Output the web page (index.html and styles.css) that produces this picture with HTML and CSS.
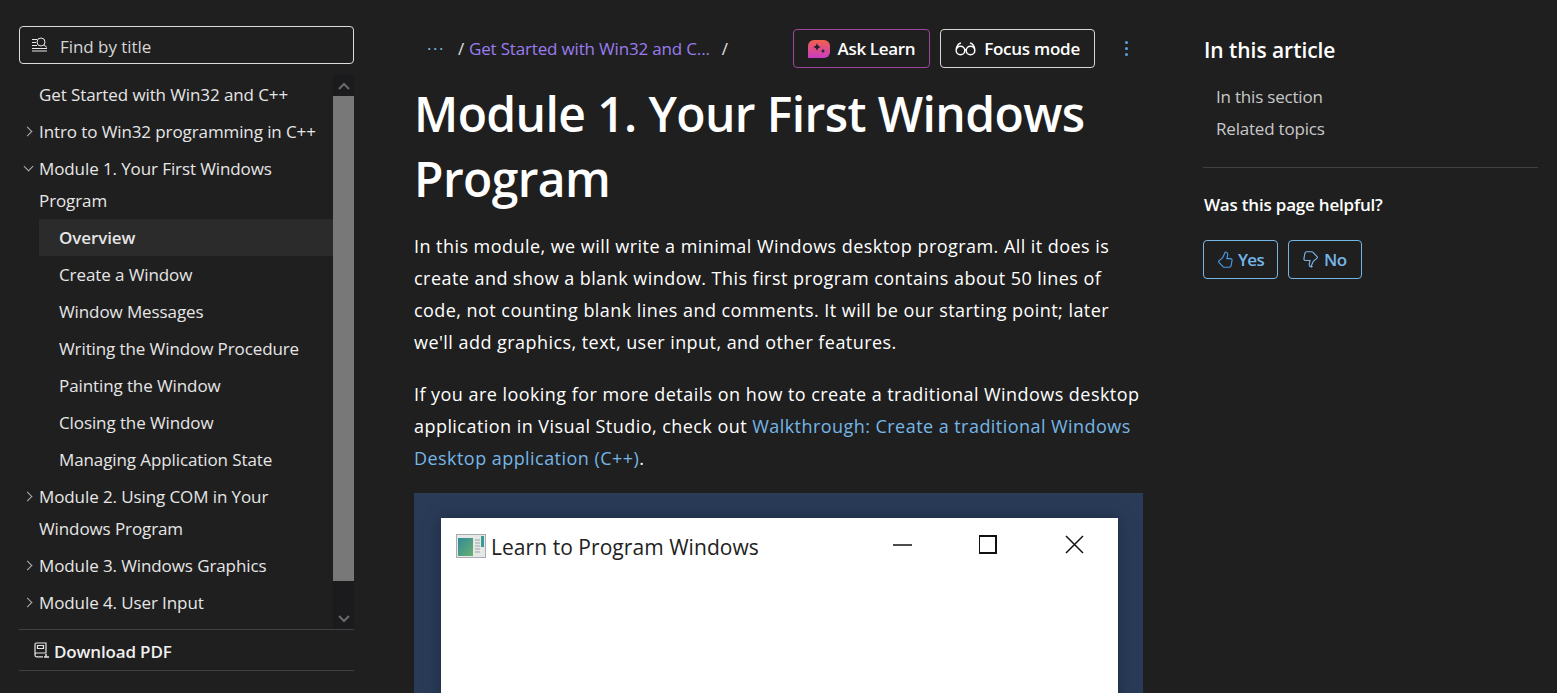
FILE: index.html
```html
<!DOCTYPE html>
<html lang="en">
<head>
    <meta charset="UTF-8">
    <meta name="viewport" content="width=device-width, initial-scale=1.0">
    <title>Module 1. Your First Windows Program</title>
    <link rel="stylesheet" href="styles.css">
</head>
<body>
    <aside class="sidebar">
        <div class="search">
            <svg class="search-icon" width="17" height="16" viewBox="0 0 17 16" fill="none" stroke="#e6e6e6" stroke-width="1">
                <path d="M1 2.5h5M1 5.5h4M1 8.5h5M1 11.5h15M1 14h15"/>
                <circle cx="10" cy="5" r="4"/>
                <path d="M13 8l3 2.5"/>
            </svg>
            <span>Find by title</span>
        </div>
        <div class="tree-wrap">
            <ul class="tree">
                <li>Get Started with Win32 and C++</li>
                <li class="closed">Intro to Win32 programming in C++</li>
                <li class="open">Module 1. Your First Windows Program</li>
                <li class="sub current">Overview</li>
                <li class="sub">Create a Window</li>
                <li class="sub">Window Messages</li>
                <li class="sub">Writing the Window Procedure</li>
                <li class="sub">Painting the Window</li>
                <li class="sub">Closing the Window</li>
                <li class="sub">Managing Application State</li>
                <li class="closed">Module 2. Using COM in Your Windows Program</li>
                <li class="closed">Module 3. Windows Graphics</li>
                <li class="closed">Module 4. User Input</li>
            </ul>
            <div class="scrollbar">
                <div class="scroll-btn">
                    <svg width="12" height="8" viewBox="0 0 12 8" fill="none" stroke="#6a6a6a" stroke-width="2"><path d="M1 7l5-5 5 5"/></svg>
                </div>
                <div class="scroll-thumb"></div>
                <div class="scroll-track"></div>
                <div class="scroll-btn">
                    <svg width="12" height="8" viewBox="0 0 12 8" fill="none" stroke="#6a6a6a" stroke-width="2"><path d="M1 1l5 5 5-5"/></svg>
                </div>
            </div>
        </div>
        <div class="download">
            <svg width="15" height="16" viewBox="0 0 15 16" fill="none" stroke="#e6e6e6" stroke-width="1.2">
                <path d="M1 13V2.5C1 1.6 1.6 1 2.5 1H12v10H2.5C1.6 11 1 11.8 1 13c0 1 .6 1.8 1.5 1.8H9"/>
                <path d="M3.5 3.5h6v3h-6z"/>
                <path d="M12 12v2.5M10 15h5" stroke-width="1.5"/>
            </svg>
            <span>Download PDF</span>
        </div>
    </aside>

    <main class="content">
        <div class="topbar">
            <nav class="crumbs">
                <span class="dots">&middot;&middot;&middot;</span>
                <span class="slash">/</span>
                <a href="#">Get Started with Win32 and C...</a>
                <span class="slash second">/</span>
            </nav>
            <div class="actions">
                <button class="btn btn-ask">
                    <svg width="22" height="18" viewBox="0 0 22 18">
                        <defs>
                            <linearGradient id="askGrad" x1="0" y1="0" x2="0" y2="1">
                                <stop offset="0" stop-color="#f2604e"/>
                                <stop offset="1" stop-color="#c93cc4"/>
                            </linearGradient>
                        </defs>
                        <path d="M6 0h10a6 6 0 0 1 6 6v6a6 6 0 0 1-6 6H0V6a6 6 0 0 1 6-6z" fill="url(#askGrad)"/>
                        <path d="M9 3c.5 2.5 1.5 3.5 4 4-2.5.5-3.5 1.5-4 4-.5-2.5-1.5-3.5-4-4 2.5-.5 3.5-1.5 4-4zM15 8.5c.3 1.5.9 2.1 2.5 2.500-1.600.4-2.200 1-2.500 2.500-.3-1.500-.9-2.100-2.500-2.500 1.600-.4 2.200-1 2.500-2.500z" fill="#20202a"/>
                    </svg>
                    <span>Ask Learn</span>
                </button>
                <button class="btn btn-focus">
                    <svg width="21" height="14" viewBox="0 0 21 14" fill="none" stroke="#fff" stroke-width="1.5">
                        <circle cx="5.5" cy="8.5" r="4.3"/>
                        <circle cx="15.5" cy="8.5" r="4.3"/>
                        <path d="M9.8 8c.4-.5 1-.5 1.4 0M1.3 7.5C1.8 4 3 1.5 6 1M19.7 7.5C19.2 4 18 1.5 15 1"/>
                    </svg>
                    <span>Focus mode</span>
                </button>
                <div class="more"><i></i><i></i><i></i></div>
            </div>
        </div>

        <h1>Module 1. Your First Windows Program</h1>

        <p>In this module, we will write a minimal Windows desktop program. All it does is create and show a blank window. This first program contains about 50 lines of code, not counting blank lines and comments. It will be our starting point; later we'll add graphics, text, user input, and other features.</p>
        <p>If you are looking for more details on how to create a traditional Windows desktop application in Visual Studio, check out <a href="#">Walkthrough: Create a traditional Windows Desktop application (C++)</a>.</p>

        <div class="figure">
            <div class="demo-window">
                <div class="demo-title">
                    <svg class="demo-icon" width="30" height="24" viewBox="0 0 30 24">
                        <defs>
                            <linearGradient id="paneGrad" x1="0" y1="0" x2="1" y2="1">
                                <stop offset="0" stop-color="#2f8a9a"/>
                                <stop offset="1" stop-color="#6ab06e"/>
                            </linearGradient>
                        </defs>
                        <rect x="0.5" y="0.5" width="29" height="23" fill="#e6e8e8" stroke="#a8aeb0"/>
                        <rect x="2" y="4" width="15" height="18" fill="url(#paneGrad)"/>
                        <path d="M19 6h5M19 9h5M19 12h5M19 15h5M19 18h5" stroke="#a0a4a4"/>
                        <rect x="25" y="2" width="3" height="11" fill="#3c9a94"/>
                    </svg>
                    <span class="demo-text">Learn to Program Windows</span>
                    <div class="demo-controls">
                        <svg width="20" height="20" viewBox="0 0 20 20" fill="none" stroke="#111" stroke-width="1.5"><path d="M0 10h19"/></svg>
                        <svg width="20" height="20" viewBox="1 0 20 20" fill="none" stroke="#111" stroke-width="2"><rect x="1" y="1" width="17" height="17"/></svg>
                        <svg width="20" height="20" viewBox="0 0 20 20" fill="none" stroke="#111" stroke-width="1.5"><path d="M1 1l17 17M18 1L1 18"/></svg>
                    </div>
                </div>
            </div>
        </div>
    </main>

    <aside class="right">
        <h2>In this article</h2>
        <ul class="toc">
            <li>In this section</li>
            <li>Related topics</li>
        </ul>
        <hr>
        <h3>Was this page helpful?</h3>
        <div class="feedback">
            <button class="btn-fb btn-yes">
                <svg width="15" height="17" viewBox="0 0 16 18" fill="none" stroke="#4c9be8" stroke-width="1.2">
                    <path d="M7.5 1.5L5 7 1 10.5c-.4.4-.4 1 0 1.5l4.5 4.8c.3.3.7.5 1.2.5h5.3c1 0 1.800-.7 2-1.700l1-5.600c.2-1-.6-2-1.700-2H9.500l.8-4C10.600 1.500 8.300.5 7.500 1.500z"/>
                </svg>
                <span>Yes</span>
            </button>
            <button class="btn-fb">
                <svg width="15" height="17" viewBox="0 0 16 18" fill="none" stroke="#7ab4ea" stroke-width="1.2">
                    <path d="M8.5 16.5L11 11l4-3.500c.4-.4.4-1 0-1.500l-4.500-4.800C10.200.9 9.800.7 9.300.7H4C3 .7 2.200 1.400 2 2.400L1 8c-.2 1 .6 2 1.700 2h4.800l-.8 4c-.3 2.500 2 3.500 2.800 2.500z"/>
                </svg>
                <span>No</span>
            </button>
        </div>
    </aside>
</body>
</html>
```

FILE: styles.css
```css
* {
    box-sizing: border-box;
}

body {
    margin: 0;
    padding: 0 19px;
    height: 693px;
    overflow: hidden;
    display: flex;
    gap: 60px;
    background-color: #1f1f1f;
    color: #fff;
    font-family: "Open Sans", "Noto Sans", sans-serif;
    font-size: 18px;
    line-height: 32px;
}

/* left column */
.sidebar {
    width: 335px;
    flex-shrink: 0;
    padding-top: 26px;
}

.search {
    height: 38px;
    display: flex;
    align-items: center;
    padding-left: 11px;
    border: 1px solid #dcdcdc;
    border-radius: 4px;
    font-size: 17px;
    color: #d6d6d6;
    letter-spacing: -0.05px;
}

.search span {
    padding-top: 3px;
}

.search-icon {
    margin-right: 12px;
}

.tree-wrap {
    margin-top: 11px;
    height: 555px;
    display: flex;
    border-bottom: 1px solid #404040;
}

.tree {
    list-style: none;
    margin: 0;
    padding: 1px 0 0;
    flex: 1;
    font-size: 17px;
    letter-spacing: -0.1px;
    color: #e6e6e6;
}

.tree li {
    position: relative;
    padding: 2.5px 0 2.5px 20px;
}

.tree li.sub {
    margin-left: 20px;
    padding-left: 20px;
}

.tree li.current {
    background-color: #2b2b2b;
    font-weight: 600;
}

.tree li.closed::before {
    content: "";
    position: absolute;
    left: 5px;
    top: 15px;
    width: 6px;
    height: 6px;
    border-top: 1.5px solid #b0b0b0;
    border-right: 1.5px solid #b0b0b0;
    transform: rotate(45deg);
}

.tree li.open::before {
    content: "";
    position: absolute;
    left: 6px;
    top: 13px;
    width: 6px;
    height: 6px;
    border-bottom: 1.5px solid #b0b0b0;
    border-right: 1.5px solid #b0b0b0;
    transform: rotate(45deg);
}

.scrollbar {
    width: 21px;
    display: flex;
    flex-direction: column;
    background-color: #1b1b1d;
}

.scroll-btn {
    height: 21px;
    display: flex;
    align-items: center;
    justify-content: center;
}

.scroll-thumb {
    height: 485px;
    background-color: #787878;
}

.scroll-track {
    flex: 1;
}

.download {
    height: 41px;
    display: flex;
    align-items: center;
    gap: 5px;
    padding-left: 15px;
    border-bottom: 1px solid #404040;
    font-size: 17px;
    font-weight: 600;
    letter-spacing: -0.15px;
    color: #f0f0f0;
}

.download span {
    padding-top: 3px;
}

/* middle column */
.content {
    width: 729px;
    flex-shrink: 0;
}

.topbar {
    height: 81px;
    padding-top: 29px;
    display: flex;
    justify-content: space-between;
}

.crumbs {
    height: 39px;
    display: flex;
    align-items: center;
    padding-top: 1px;
    font-size: 17px;
    letter-spacing: -0.17px;
}

.crumbs a {
    color: #9a7cf0;
    text-decoration: none;
}

.dots {
    color: #75b6e7;
    margin: 0 13px;
    letter-spacing: 1.5px;
}

.slash {
    margin-right: 5px;
    color: #e0e0e0;
}

.slash.second {
    margin: 0 0 0 12px;
}

.actions {
    display: flex;
    align-items: flex-start;
    gap: 10px;
}

.btn {
    height: 39px;
    display: flex;
    align-items: center;
    gap: 8px;
    padding: 0 14px;
    background: none;
    border: 1px solid #d6d6d6;
    border-radius: 4px;
    color: #fff;
    font: 600 17px "Open Sans", sans-serif;
    letter-spacing: -0.25px;
}

.btn-ask {
    border-color: #9c479c;
    letter-spacing: -0.35px;
}

.more {
    width: 38px;
    height: 39px;
    display: flex;
    flex-direction: column;
    align-items: center;
    justify-content: center;
    gap: 3px;
    padding-left: 4px;
}

.more i {
    width: 3px;
    height: 3px;
    border-radius: 50%;
    background-color: #5aa0e6;
}

h1 {
    margin: 0;
    font-size: 48px;
    line-height: 65px;
    font-weight: 600;
    letter-spacing: -0.6px;
}

p {
    margin: 19px 0 0;
    letter-spacing: 0.45px;
}

p + p {
    margin-top: 20px;
}

p a {
    color: #75b6e7;
    text-decoration: none;
}

.figure {
    margin-top: 19px;
    height: 300px;
    padding: 25px 25px 0 27px;
    background-color: #2a3b58;
}

.demo-window {
    height: 100%;
    background-color: #fff;
    padding: 14px 15px;
    box-shadow: 0 0 14px #1e2b40;
    color: #222;
}

.demo-title {
    height: 28px;
    display: flex;
    align-items: center;
}

.demo-icon {
    margin-right: 5px;
}

.demo-text {
    padding-top: 2px;
    font-size: 21px;
    letter-spacing: 0.05px;
}

.demo-controls {
    margin-left: auto;
    display: flex;
    gap: 66px;
    padding-right: 18px;
    padding-bottom: 2px;
}

/* right column */
.right {
    width: 335px;
    flex-shrink: 0;
    padding-top: 34px;
}

h2 {
    margin: 0;
    padding-left: 1px;
    font-size: 21px;
    font-weight: 600;
    line-height: 32px;
    letter-spacing: -0.05px;
}

.toc {
    list-style: none;
    margin: 15px 0 0;
    padding: 0 0 0 13px;
    font-size: 17px;
    letter-spacing: -0.2px;
    color: #c8c8c8;
}

hr {
    margin: 22px 0 0;
    border: none;
    border-top: 1px solid #404040;
}

h3 {
    margin: 21px 0 0;
    padding-left: 1px;
    font-size: 17px;
    font-weight: 600;
    line-height: 32px;
    letter-spacing: -0.2px;
}

.feedback {
    margin-top: 19px;
    display: flex;
    gap: 10px;
}

.btn-fb {
    height: 39px;
    display: flex;
    align-items: center;
    gap: 6px;
    padding: 0 14px;
    background: none;
    border: 1px solid #75b6e7;
    border-radius: 4px;
    color: #75b6e7;
    font: 600 17px "Open Sans", sans-serif;
    letter-spacing: -0.5px;
}

.btn-yes {
    gap: 5px;
    padding-right: 13px;
    letter-spacing: -0.7px;
}
```
